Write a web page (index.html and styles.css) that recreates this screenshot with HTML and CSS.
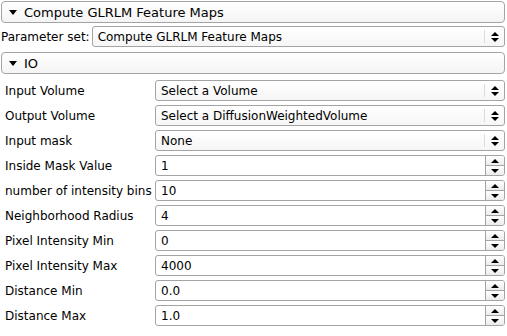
FILE: index.html
```html
<!DOCTYPE html>
<html lang="en">
<head>
    <meta charset="UTF-8">
    <title>Compute GLRLM Feature Maps</title>
    <link rel="stylesheet" href="styles.css">
</head>
<body>

    <div class="panel">
        <div class="collapsible">
            <span class="tri"></span>
            <span>Compute GLRLM Feature Maps</span>
        </div>

        <div class="param-set">
            <span class="param-label">Parameter set:</span>
            <div class="combo">
                <span class="combo-text">Compute GLRLM Feature Maps</span>
                <span class="combo-arrows"><span class="up"></span><span class="down"></span></span>
            </div>
        </div>

        <div class="collapsible">
            <span class="tri"></span>
            <span>IO</span>
        </div>

        <!-- IO parameters -->
        <div class="form">
            <div class="row">
                <span class="label">Input Volume</span>
                <div class="combo">
                    <span class="combo-text">Select a Volume</span>
                    <span class="combo-arrows"><span class="up"></span><span class="down"></span></span>
                </div>
            </div>
            <div class="row">
                <span class="label">Output Volume</span>
                <div class="combo">
                    <span class="combo-text">Select a DiffusionWeightedVolume</span>
                    <span class="combo-arrows"><span class="up"></span><span class="down"></span></span>
                </div>
            </div>
            <div class="row">
                <span class="label">Input mask</span>
                <div class="combo">
                    <span class="combo-text">None</span>
                    <span class="combo-arrows"><span class="up"></span><span class="down"></span></span>
                </div>
            </div>
            <div class="row">
                <span class="label">Inside Mask Value</span>
                <div class="spin">
                    <span class="spin-text">1</span>
                    <span class="spin-btns"><span class="btn"><span class="up"></span></span><span class="btn"><span class="down"></span></span></span>
                </div>
            </div>
            <div class="row">
                <span class="label">number of intensity bins</span>
                <div class="spin">
                    <span class="spin-text">10</span>
                    <span class="spin-btns"><span class="btn"><span class="up"></span></span><span class="btn"><span class="down"></span></span></span>
                </div>
            </div>
            <div class="row">
                <span class="label">Neighborhood Radius</span>
                <div class="spin">
                    <span class="spin-text">4</span>
                    <span class="spin-btns"><span class="btn"><span class="up"></span></span><span class="btn"><span class="down"></span></span></span>
                </div>
            </div>
            <div class="row">
                <span class="label">Pixel Intensity Min</span>
                <div class="spin">
                    <span class="spin-text">0</span>
                    <span class="spin-btns"><span class="btn"><span class="up"></span></span><span class="btn"><span class="down"></span></span></span>
                </div>
            </div>
            <div class="row">
                <span class="label">Pixel Intensity Max</span>
                <div class="spin">
                    <span class="spin-text">4000</span>
                    <span class="spin-btns"><span class="btn"><span class="up"></span></span><span class="btn"><span class="down"></span></span></span>
                </div>
            </div>
            <div class="row">
                <span class="label">Distance Min</span>
                <div class="spin">
                    <span class="spin-text">0.0</span>
                    <span class="spin-btns"><span class="btn"><span class="up"></span></span><span class="btn"><span class="down"></span></span></span>
                </div>
            </div>
            <div class="row">
                <span class="label">Distance Max</span>
                <div class="spin">
                    <span class="spin-text">1.0</span>
                    <span class="spin-btns"><span class="btn"><span class="up"></span></span><span class="btn"><span class="down"></span></span></span>
                </div>
            </div>
        </div>
    </div>

</body>
</html>
```

FILE: styles.css
```css
body {
    font-family: "DejaVu Sans", sans-serif;
    font-size: 12px;
    color: #000;
    background-color: #fff;
    margin: 0;
    padding: 1px 2px 0 1px;
}

.collapsible {
    display: flex;
    align-items: center;
    gap: 7px;
    height: 20px;
    padding-left: 7px;
    font-size: 13px;
    border: 1px solid #a4a4a4;
    border-radius: 4px;
    background: linear-gradient(#ffffff, #f4f4f4);
}

.tri {
    width: 0;
    height: 0;
    border-left: 4px solid transparent;
    border-right: 4px solid transparent;
    border-top: 5px solid #000;
}

.param-set {
    display: flex;
    align-items: center;
    gap: 2px;
    margin: 3px 0 5px 0;
}

.param-label {
    white-space: nowrap;
}

.param-set .combo {
    flex: 1;
}

.combo, .spin {
    display: flex;
    align-items: center;
    height: 19px;
    border: 1px solid #a4a4a4;
    border-radius: 3px;
    background: linear-gradient(#ffffff, #f6f6f6);
}

.combo-text, .spin-text {
    flex: 1;
    padding-left: 5px;
    white-space: nowrap;
    overflow: hidden;
}

.combo-arrows {
    display: flex;
    flex-direction: column;
    align-items: center;
    gap: 2px;
    width: 19px;
    height: 13px;
    justify-content: center;
    border-left: 1px solid #dcdcdc;
}

.up {
    width: 0;
    height: 0;
    border-left: 4px solid transparent;
    border-right: 4px solid transparent;
    border-bottom: 4px solid #000;
}

.down {
    width: 0;
    height: 0;
    border-left: 4px solid transparent;
    border-right: 4px solid transparent;
    border-top: 4px solid #000;
}

.form {
    display: flex;
    flex-direction: column;
    gap: 4px;
    padding: 6px 0 0 4px;
}

.row {
    display: flex;
    align-items: center;
    height: 21px;
}

.label {
    width: 150px;
    flex-shrink: 0;
    white-space: nowrap;
}

.row .combo, .row .spin {
    flex: 1;
}

.spin {
    background: #fff;
    overflow: hidden;
}

.spin-btns {
    display: flex;
    flex-direction: column;
    width: 18px;
    height: 19px;
    border-left: 1px solid #a4a4a4;
}

.spin-btns .btn {
    flex: 1;
    display: flex;
    align-items: center;
    justify-content: center;
    background: linear-gradient(#ffffff, #ececec);
}

.spin-btns .btn + .btn {
    border-top: 1px solid #a4a4a4;
}
```
